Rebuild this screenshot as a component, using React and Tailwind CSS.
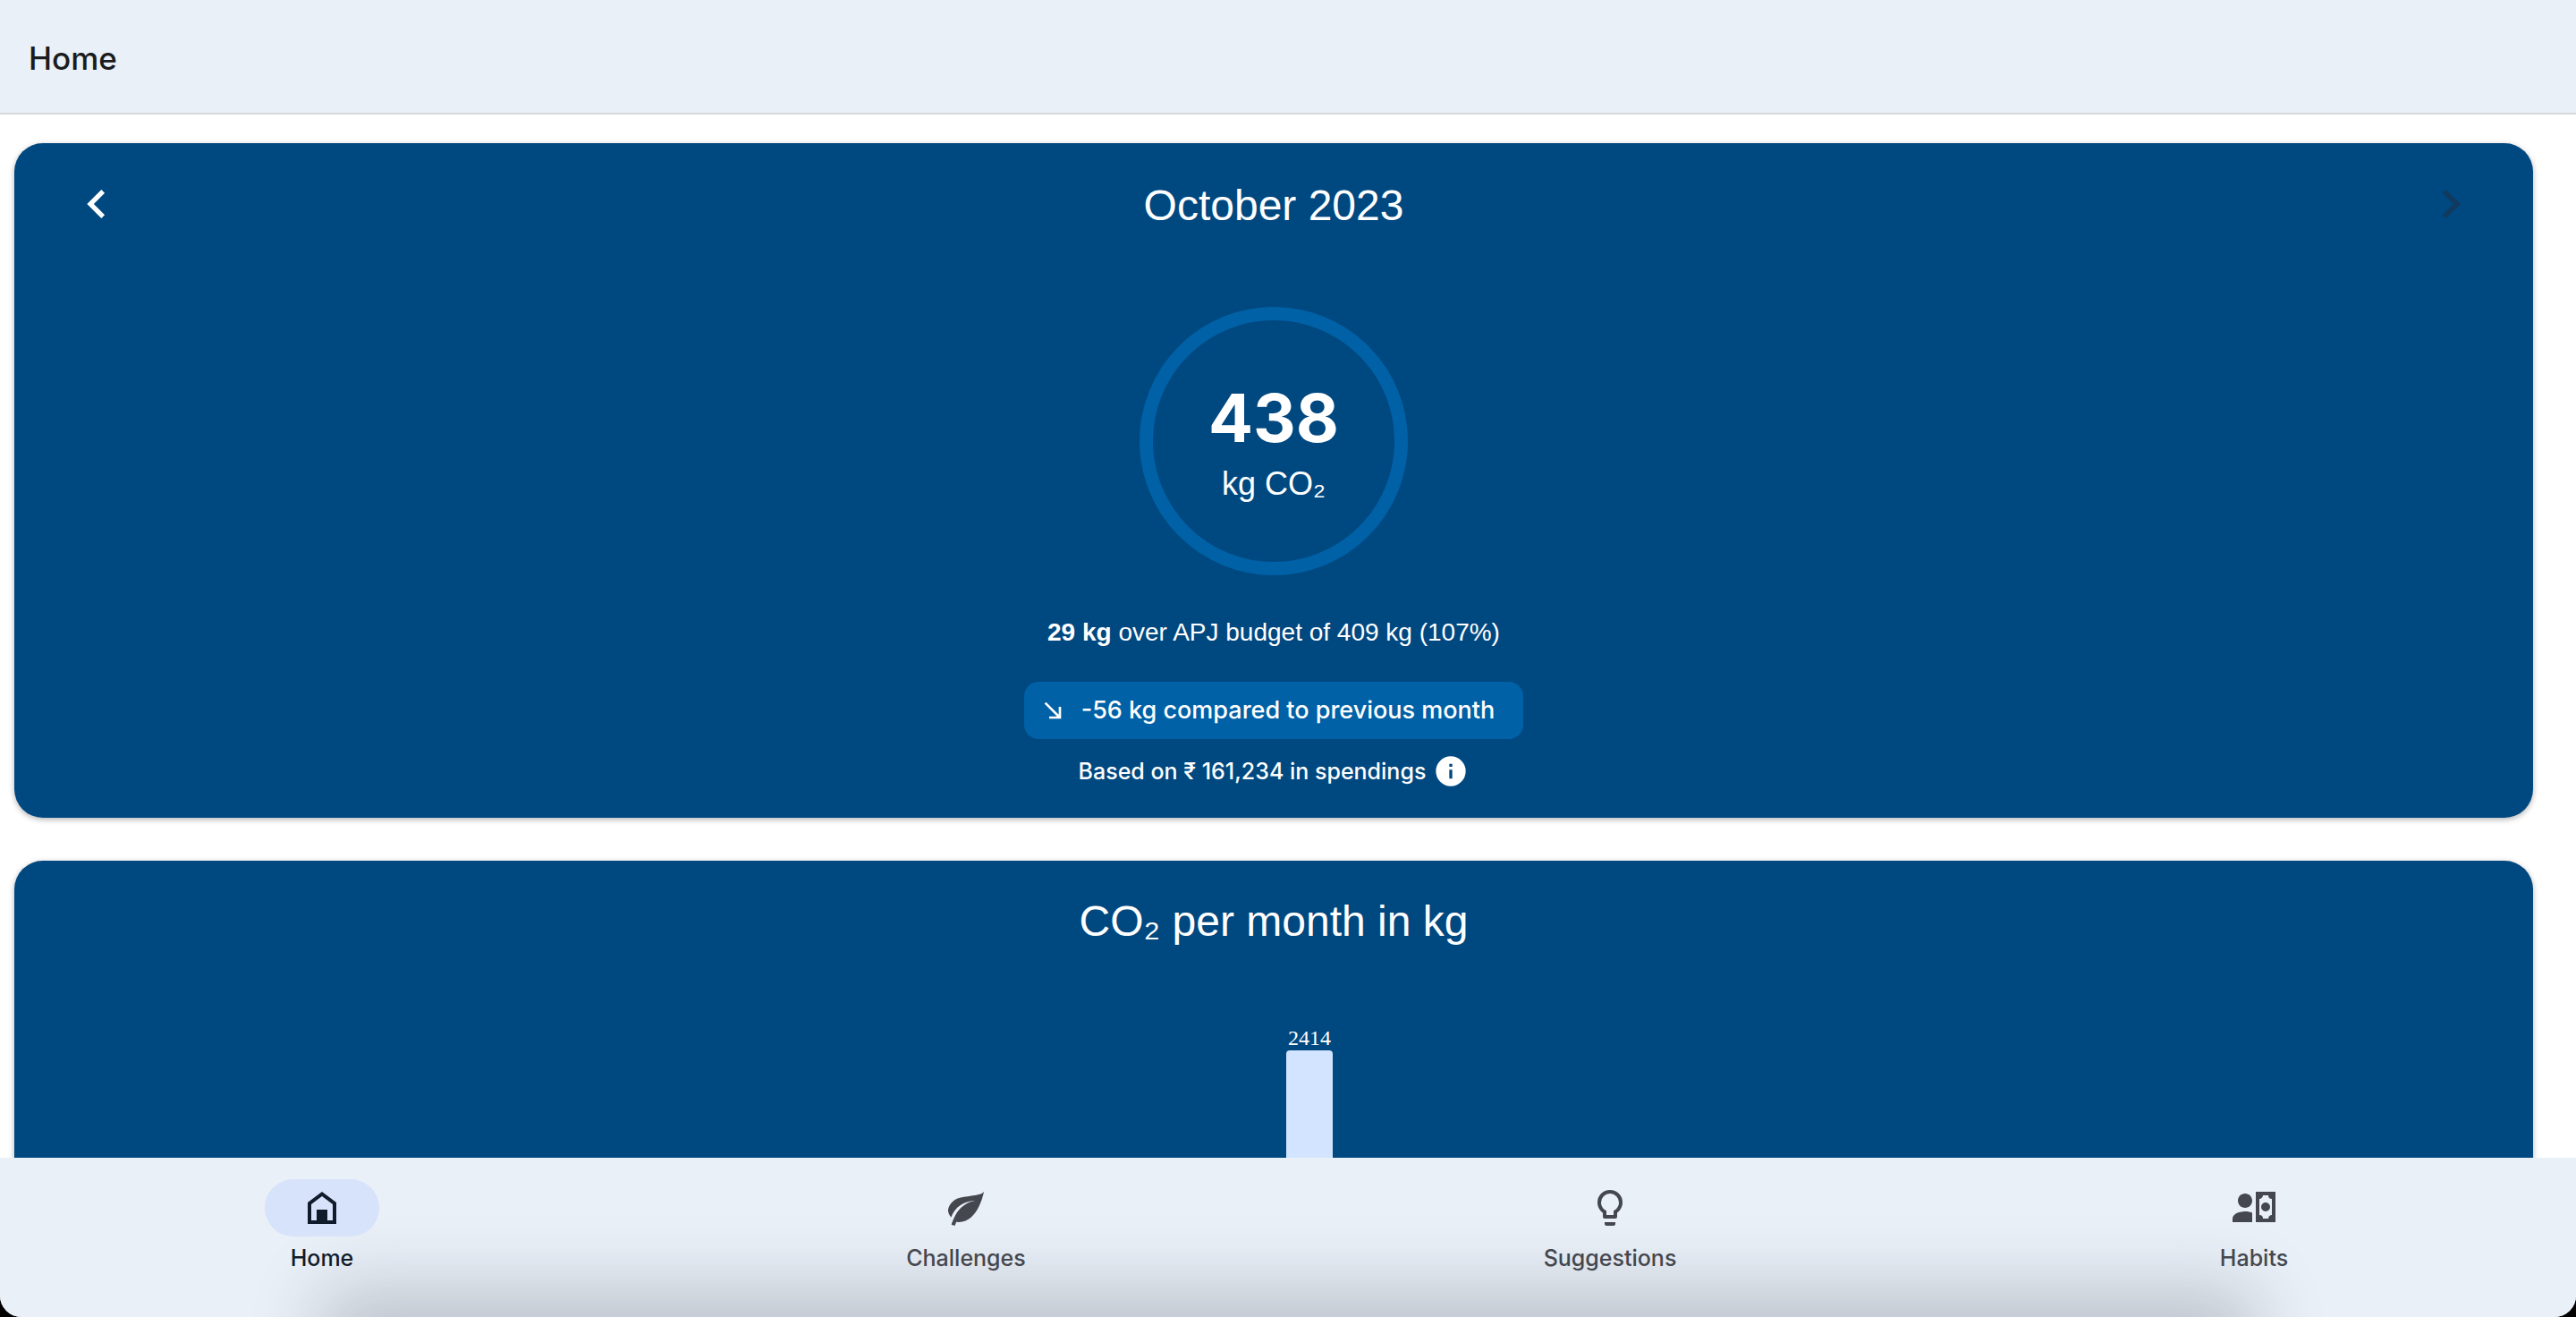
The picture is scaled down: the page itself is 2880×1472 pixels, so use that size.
const tabs = [
  { label: "Home", icon: "M12 3 4 9v12h16V9zM12 5.5l6 4.5v9h-3v-6H9v6H6v-9z", active: true },
  {
    label: "Challenges",
    icon: "M17 8C8 10 5.9 16.17 3.82 21.34L5.71 22l.95-2.3c.48.17.98.3 1.34.3C19 20 22 3 22 3c-1 2-8 2.25-13 3.25S2 11.5 2 13.5s1.75 3.75 1.75 3.75C7 8 17 8 17 8z",
  },
  {
    label: "Suggestions",
    icon: "M12 2a7 7 0 0 1 7 7c0 2.38-1.19 4.47-3 5.74V17a1 1 0 0 1-1 1H9a1 1 0 0 1-1-1v-2.26C6.19 13.47 5 11.38 5 9a7 7 0 0 1 7-7M9 21v-1h6v1a1 1 0 0 1-1 1h-4a1 1 0 0 1-1-1m3-17a5 5 0 0 0-5 5c0 2.05 1.23 3.81 3 4.58V16h4v-2.42c1.77-.77 3-2.53 3-4.58a5 5 0 0 0-5-5z",
  },
  {
    label: "Habits",
    icon: "M11 8c0 2.21-1.79 4-4 4s-4-1.79-4-4 1.79-4 4-4 4 1.79 4 4m0 6.72V20H0v-2c0-2.21 3.13-4 7-4 1.5 0 2.87.27 4 .72M24 20H13V3h11v17m-8-8.5a2.5 2.5 0 0 1 5 0 2.5 2.5 0 0 1-5 0M22 7a2 2 0 0 1-2-2h-3c0 1.11-.89 2-2 2v9a2 2 0 0 1 2 2h3c0-1.1.9-2 2-2V7z",
  },
];

function Icon({ d, className }) {
  return (
    <svg viewBox="0 0 24 24" fill="currentColor" fillRule="evenodd" aria-hidden="true" className={className}>
      <path d={d} />
    </svg>
  );
}

function Card({ children }) {
  return (
    <section className="flex flex-col items-center rounded-[32px] bg-[#004880] px-15 text-white shadow-[0_2px_6px_rgba(0,0,0,0.3)]">
      {children}
    </section>
  );
}

function MonthCard() {
  return (
    <Card>
      <div className="flex w-full items-center justify-between pt-9">
        <button aria-label="Previous month">
          <Icon className="size-16" d="M15.41 16.58 10.83 12l4.58-4.59L14 6l-6 6 6 6z" />
        </button>
        <h2 className="pt-1 text-[48px] leading-15">October 2023</h2>
        <button aria-label="Next month" disabled className="text-[#123a5e]">
          <Icon className="size-16" d="M8.59 16.58 13.17 12 8.59 7.41 10 6l6 6-6 6z" />
        </button>
      </div>
      <div className="mt-[83px] flex size-[300px] flex-col items-center justify-center rounded-full border-[15px] border-[#0061a6] pt-3">
        <strong className="font-[Inter,sans-serif] text-[74px] leading-20 font-bold">438</strong>
        <span className="mt-1 text-[36px] leading-15">kg CO₂</span>
      </div>
      <p className="mt-11 text-[28px] leading-10">
        <b>29 kg</b> over APJ budget of 409 kg (107%)
      </p>
      <div className="mt-[35px] flex h-16 items-center gap-4 rounded-2xl bg-[#0061a6] pr-8 pl-4">
        <Icon className="size-8" d="M5 6.41 6.41 5 17 15.59V9h2v10H9v-2h6.59z" />
        <span className="font-[Inter,sans-serif] text-[27px] leading-10 font-medium">-56 kg compared to previous month</span>
      </div>
      <div className="mt-4 mb-8 flex items-center gap-2">
        <span className="font-[Inter,sans-serif] text-[25px] leading-10 font-medium">Based on ₹ 161,234 in spendings</span>
        <button aria-label="About these spendings">
          <Icon className="size-10" d="M12 2a10 10 0 1 0 0 20 10 10 0 0 0 0-20M11 7h2v2h-2zM11 11h2v6h-2z" />
        </button>
      </div>
    </Card>
  );
}

function ChartCard() {
  return (
    <Card>
      <h2 className="pt-9 text-[48px] leading-16">CO₂ per month in kg</h2>
      <div className="mt-21 ml-20 flex flex-col items-center">
        <span className="font-['Liberation_Serif',serif] text-[24px] leading-7">2414</span>
        <div className="h-[480px] w-13 rounded-t bg-[#d2e4ff]" />
      </div>
    </Card>
  );
}

export default function App() {
  return (
    <div className="h-screen bg-black font-['Liberation_Sans',Arial,sans-serif]">
      <div className="flex h-full flex-col overflow-hidden rounded-b-3xl bg-white">
        <header className="flex h-32 shrink-0 items-center border-b-2 border-[#d8d8d8] bg-[#e9f0f8] px-8">
          <h1 className="pt-1 font-[Inter,sans-serif] text-[35px] leading-12 font-medium text-[#1a1c1e]">Home</h1>
        </header>
        <main className="flex min-h-0 flex-1 flex-col gap-12 overflow-hidden pt-8 pr-12 pl-4">
          <MonthCard />
          <ChartCard />
        </main>
        <nav className="relative grid h-[178px] shrink-0 grid-cols-4 overflow-hidden bg-[#e9f0f8]">
          <div className="pointer-events-none absolute inset-x-[400px] -bottom-12 h-10 shadow-[0_0_80px_40px_rgba(40,40,50,0.22)]" />
          {tabs.map((tab) => (
            <a
              key={tab.label}
              href={"#" + tab.label.toLowerCase()}
              aria-current={tab.active ? "page" : undefined}
              className="relative flex flex-col items-center gap-2 pt-6 text-[#44474e] aria-[current=page]:text-[#101c2b]"
            >
              <span className={tab.active ? "rounded-full bg-[#d7e3fa] px-10 py-2" : "px-10 py-2"}>
                <Icon className="size-12" d={tab.icon} />
              </span>
              <span className="font-[Inter,sans-serif] text-[25px] leading-8 font-medium">{tab.label}</span>
            </a>
          ))}
        </nav>
      </div>
    </div>
  );
}
